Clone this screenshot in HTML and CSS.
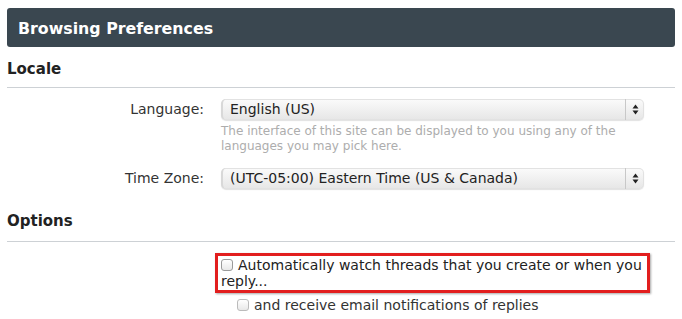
FILE: index.html
```html
<!DOCTYPE html>
<html>
<head>
<meta charset="utf-8">
<link rel="stylesheet" href="styles.css">
</head>
<body>
<div class="page">
  <div class="header">Browsing Preferences</div>

  <h3 class="section section-locale">Locale</h3>
  <div class="form">
    <div class="row">
      <div class="label">Language:</div>
      <div class="control">
        <div class="select">
          <span class="value">English (US)</span>
          <span class="arrows"><svg width="7" height="11" viewBox="0 0 7 11"><path d="M3.5 0.5 L6.5 4.5 L0.5 4.5 Z M3.5 10.5 L6.5 6.5 L0.5 6.5 Z" fill="#222"/></svg></span>
        </div>
        <p class="hint">The interface of this site can be displayed to you using any of the languages you may pick here.</p>
      </div>
    </div>
    <div class="row">
      <div class="label">Time Zone:</div>
      <div class="control">
        <div class="select">
          <span class="value">(UTC-05:00) Eastern Time (US &amp; Canada)</span>
          <span class="arrows"><svg width="7" height="11" viewBox="0 0 7 11"><path d="M3.5 0.5 L6.5 4.5 L0.5 4.5 Z M3.5 10.5 L6.5 6.5 L0.5 6.5 Z" fill="#222"/></svg></span>
        </div>
      </div>
    </div>
  </div>

  <h3 class="section section-options">Options</h3>
  <div class="form form-options">
    <div class="row">
      <div class="label"></div>
      <div class="control">
        <div class="highlight">
          <label class="check"><span class="box"></span>Automatically watch threads that you create or when you reply...</label>
        </div>
        <label class="check sub"><span class="box"></span>and receive email notifications of replies</label>
      </div>
    </div>
  </div>
</div>
</body>
</html>
```

FILE: styles.css
```css
html, body {
  margin: 0;
  padding: 0;
  background: #fff;
}
body {
  font-family: "DejaVu Sans", Verdana, sans-serif;
  color: #222;
}
.page {
  padding: 8px 7px 0 7px;
}
.header {
  background: #3a4750;
  color: #fff;
  font-weight: bold;
  font-size: 15.8px;
  height: 39px;
  line-height: 41px;
  padding-left: 11px;
  border-radius: 3px;
}
.section {
  margin: 0;
  font-size: 15px;
  font-weight: bold;
  color: #222;
  line-height: 18px;
  border-bottom: 1px solid #cdd1d5;
}
.section-locale {
  padding: 13px 0 9px 0;
}
.section-options {
  margin-top: 23px;
  padding: 0 0 11px 0;
}
.form {
  padding-top: 11px;
}
.form-options {
  padding-top: 11px;
}
.row {
  display: grid;
  grid-template-columns: 197px 423px;
  column-gap: 17px;
}
.row + .row {
  margin-top: 14px;
}
.label {
  text-align: right;
  font-size: 14px;
  line-height: 21px;
  color: #333;
}
.select {
  display: flex;
  align-items: center;
  height: 21px;
  border-radius: 5px;
  background: linear-gradient(#fbfbfb, #e6e6e6);
  box-shadow: 0 0 0 1px #e2e2e2 inset, 0 1px 1px rgba(0,0,0,0.12);
  font-size: 14px;
  color: #222;
}
.value {
  flex: 1;
  padding-left: 7px;
  line-height: 21px;
  border-left: 2px solid #d8d8d8;
  border-radius: 5px 0 0 5px;
}
.arrows {
  width: 18px;
  height: 21px;
  border-left: 1px solid #c8c8c8;
  display: flex;
  align-items: center;
  justify-content: center;
}
.arrows svg { display: block; }
.hint {
  margin: 4px 0 0 0;
  font-size: 12px;
  line-height: 15px;
  color: #adadad;
}
.highlight {
  margin-left: -6px;
  width: 435px;
  border: 3px solid #e21e1e;
  box-shadow: 1px 1px 2px rgba(0,0,0,0.35);
  padding: 1px 0 1px 3px;
  box-sizing: border-box;
}
.check {
  display: block;
  font-size: 14px;
  line-height: 16px;
  color: #222;
}
.box {
  display: inline-block;
  width: 10px;
  height: 10px;
  border: 1px solid #9a9a9a;
  border-radius: 3px;
  background: linear-gradient(#fff, #e8e8e8);
  margin-right: 5px;
  vertical-align: -1px;
}
.sub {
  margin-top: 4px;
  line-height: 17px;
  padding-left: 16px;
  color: #333;
}
.sub .box {
  border-color: #bbb;
}
```
